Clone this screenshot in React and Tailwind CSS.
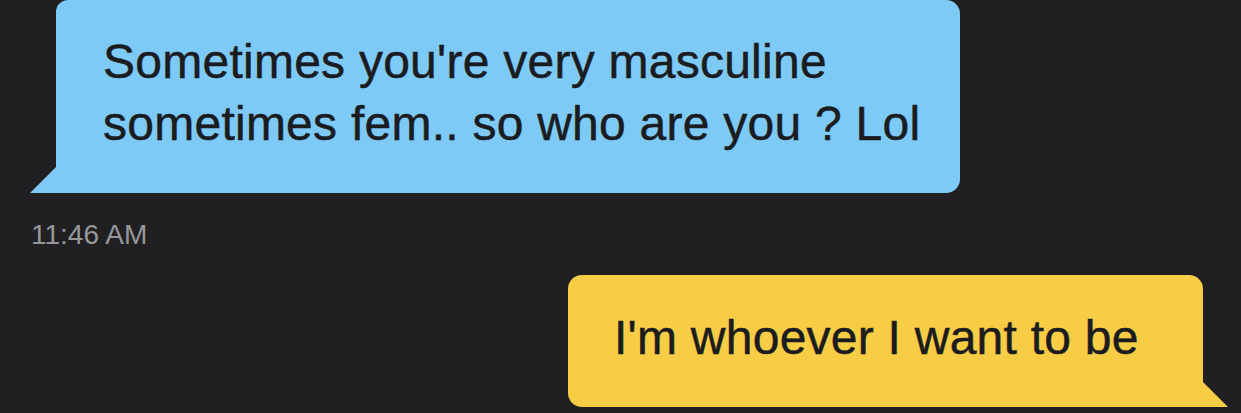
export default function App() {
  return (
    <div className="w-[1241px] h-[413px] bg-[#202022] overflow-hidden flex flex-col" style={{ fontFamily: '"Liberation Sans", Arial, sans-serif' }}>
      <div className="relative ml-[56px] w-[904px] h-[193px] bg-[#7ecaf6] rounded-tl-[12px] rounded-tr-[14px] rounded-br-[14px] pl-[47px] pt-[31px] text-[48px] leading-[62px] tracking-[0.25px] text-[#1b1c1f] [-webkit-text-stroke:0.5px_#1b1c1f]">
        <span className="absolute left-[-26px] bottom-0 w-[26px] h-[26px] bg-[#7ecaf6] [clip-path:polygon(100%_0,100%_100%,0_100%)]" />
        <p>Sometimes you're very masculine</p>
        <p>sometimes fem.. so who are you ? Lol</p>
      </div>
      <div className="mt-[26px] pl-[31px] text-[28px] leading-[32px] text-[#97979b]">11:46 AM</div>
      <div className="relative mt-[24px] ml-[568px] w-[635px] h-[132px] bg-[#f8cd46] rounded-tl-[14px] rounded-tr-[14px] rounded-bl-[14px] pl-[46px] pt-[32px] text-[48px] leading-[62px] tracking-[0.25px] text-[#1b1c1f] [-webkit-text-stroke:0.5px_#1b1c1f]">
        <span className="absolute right-[-25px] bottom-0 w-[25px] h-[25px] bg-[#f8cd46] [clip-path:polygon(0_0,100%_100%,0_100%)]" />
        <p>I'm whoever I want to be</p>
      </div>
    </div>
  );
}
